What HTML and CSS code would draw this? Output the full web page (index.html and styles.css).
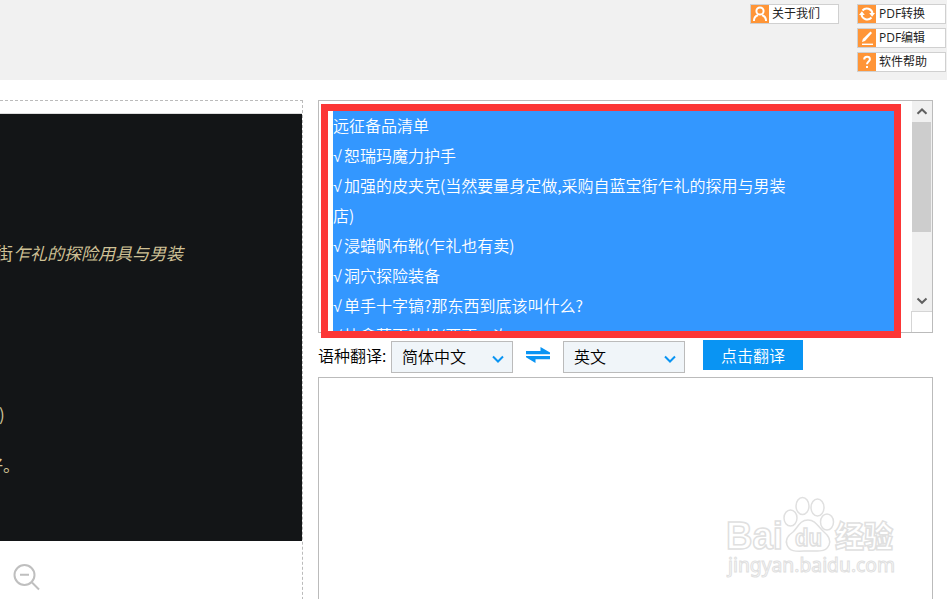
FILE: index.html
```html
<!DOCTYPE html>
<html lang="zh-CN">
<head>
  <meta charset="UTF-8">
  <title>图片文字识别</title>
  <link rel="stylesheet" href="styles.css">
</head>
<body>

<header>
  <div class="links">
    <a class="link">
      <svg viewBox="0 0 18 18"><circle cx="9" cy="6" r="3.600"/><path d="M3 16v-1a5.500 5.500 0 0 1 4-4.800M15 16v-1a5.500 5.500 0 0 0-4-4.800"/></svg>
      <span>关于我们</span>
    </a>
  </div>
  <div class="links">
    <a class="link">
      <svg viewBox="0 0 18 18"><path d="M4.500 5.500a5.700 5.700 0 0 1 10 3M13.500 12.500a5.700 5.700 0 0 1-10-3"/><path class="fill" d="M11.200 8H17l-2.900 3.800zM1 10h5.800L3.900 6.200z"/></svg>
      <span>PDF转换</span>
    </a>
    <a class="link">
      <svg class="thin" viewBox="0 0 18 18"><path d="M4 15.300h11"/><path class="fill" d="M4 13l.8-3L12.500 2.500l1.500 1.500L7 12z"/></svg>
      <span>PDF编辑</span>
    </a>
    <a class="link">
      <svg viewBox="0 0 18 18"><path d="M6.200 6.500c0-3.800 5.700-3.500 5.700-.3 0 2.300-2.900 2.200-2.900 5M9 13v2"/></svg>
      <span>软件帮助</span>
    </a>
  </div>
</header>

<main>
  <section class="preview">
    <div class="photo">
      <p class="shop">街<i>乍礼的探险用具与男装</i></p>
      <p class="bracket">)</p>
      <p class="good">好。</p>
    </div>
    <svg class="zoomOut" viewBox="0 0 28 28"><circle cx="11.500" cy="12" r="10"/><path d="M7 11.700h9M19 19.500l7 7"/></svg>
  </section>

  <section class="work">
    <div class="result">
      <div class="selected">
        <p>远征备品清单</p>
        <p><b>√</b>恕瑞玛魔力护手</p>
        <p><b>√</b>加强的皮夹克(当然要量身定做,采购自蓝宝街乍礼的探用与男装<br>店)</p>
        <p><b>√</b>浸蜡帆布靴(乍礼也有卖)</p>
        <p><b>√</b>洞穴探险装备</p>
        <p><b>√</b>单手十字镐?那东西到底该叫什么?</p>
        <p><b>√</b>快拿莫不装机(要不一次</p>
      </div>
      <div class="scrollbar">
        <svg viewBox="0 0 20 21"><path d="M5.500 12.800L10 8.500l4.500 4.300"/></svg>
        <div class="thumb"></div>
        <svg class="down" viewBox="0 0 20 21"><path d="M5.500 8.500L10 12.800l4.500-4.300"/></svg>
        <div class="corner"></div>
      </div>
      <div class="redFrame"></div>
    </div>

    <div class="toolbar">
      <span class="label">语种翻译:</span>
      <div class="select"><span>简体中文</span><svg viewBox="0 0 12 8"><path d="M1 1.500l5 5 5-5"/></svg></div>
      <svg class="swap" viewBox="0 0 24 16"><path d="M0 4h14.500V0L24 5.500v1.700H0zM24 9H0v1.300L9.500 16v-3.700H24z"/></svg>
      <div class="select"><span>英文</span><svg viewBox="0 0 12 8"><path d="M1 1.500l5 5 5-5"/></svg></div>
      <button>点击翻译</button>
    </div>

    <div class="output">
      <svg class="watermark" viewBox="0 0 174 86">
        <text x="0" y="53" font-size="38" textLength="57" lengthAdjust="spacingAndGlyphs" class="bold">Bai</text>
        <text x="109" y="51" font-size="30" textLength="58" lengthAdjust="spacingAndGlyphs" class="cjk">经验</text>
        <ellipse cx="64.500" cy="22" rx="6.500" ry="8"/>
        <ellipse cx="76.500" cy="10" rx="6.500" ry="8.500"/>
        <ellipse cx="91.500" cy="11.500" rx="6.500" ry="8.500"/>
        <ellipse cx="101" cy="26" rx="6.500" ry="8"/>
        <path d="M82 24c-8 0-10 7-15 12-6 4-8 8-6 13 3 8 11 6 22 6s17 1 20-6c2-5 0-9-5-13-6-5-8-12-16-12z"/>
        <text x="69" y="50" font-size="23" textLength="27" lengthAdjust="spacingAndGlyphs" class="du">du</text>
        <text x="2" y="76" font-size="19" textLength="167" lengthAdjust="spacingAndGlyphs" class="site">jingyan.baidu.com</text>
      </svg>
    </div>
  </section>
</main>

</body>
</html>
```
FILE: styles.css
```css
* {
  box-sizing: border-box;
}

body {
  margin: 0;
  height: 599px;
  overflow: hidden;
  background: #fff;
  color: #000;
  font-family: "Noto Sans CJK SC", sans-serif;
  font-weight: 350;
}

p {
  margin: 0;
}

svg {
  display: block;
  flex: none;
  fill: none;
}

header {
  height: 80px;
  padding: 4px 1px 0 0;
  background: #f1f1f1;
  display: flex;
  justify-content: flex-end;
  gap: 18px;
}

.links {
  display: flex;
  flex-direction: column;
  gap: 4px;
}

.link {
  width: 89px;
  height: 20px;
  border: 1px solid #d0d0d0;
  background: #fff;
  display: flex;
  align-items: flex-start;
  gap: 3px;
  color: #222;
  font-family: "Open Sans", "Noto Sans CJK SC", sans-serif;
  font-size: 12px;
  font-weight: 400;
  line-height: 18px;
  white-space: nowrap;
}

.link svg {
  width: 18px;
  height: 18px;
  background: #ff9537;
  stroke: #fff;
  stroke-width: 2;
}

.link svg.thin {
  stroke-width: 1.4;
}

.link .fill {
  fill: #fff;
  stroke: none;
}

main {
  display: flex;
  gap: 15px;
  padding-top: 20px;
}

.preview {
  width: 303px;
  height: 520px;
  padding-top: 12px;
  border-top: 1px dashed #bbb;
  border-right: 1px dashed #bbb;
}

.photo {
  height: 428px;
  padding-top: 125px;
  border-top: 1px solid #ddd;
  background: #131517;
  color: #cfc196;
  font-size: 17px;
  line-height: 28px;
  font-weight: 400;
  overflow: hidden;
}

.shop {
  margin-left: -4px;
}

.bracket {
  margin: 133px 0 0 -1px;
}

.good {
  margin: 23px 0 0 -14px;
}

.zoomOut {
  width: 28px;
  height: 28px;
  margin: 22px 0 0 13px;
  stroke: #bfbfbf;
  stroke-width: 2;
}

.work {
  width: 615px;
}

.result {
  position: relative;
  height: 233px;
  padding: 10px 0 1px 14px;
  border: 1px solid #bbb;
  display: flex;
}

.selected {
  width: 561px;
  height: 221px;
  overflow: hidden;
  background: #3397ff;
  color: #fff;
  font-size: 16px;
  line-height: 30px;
  white-space: nowrap;
}

.selected p {
  position: relative;
  top: -1px;
}

.selected b {
  display: inline-block;
  width: 11px;
  font: 400 16px "Liberation Sans", sans-serif;
}

.scrollbar {
  width: 20px;
  height: 231px;
  margin: -10px 0 0 auto;
  background: #f0f0f0;
}

.scrollbar svg {
  width: 20px;
  height: 21px;
  stroke: #606060;
  stroke-width: 2;
}

.thumb {
  width: 19px;
  height: 110px;
  background: #cdcdcd;
}

.scrollbar .down {
  margin-top: 58px;
}

.corner {
  height: 21px;
  margin-left: -1px;
  border: 1px solid #d5d5d5;
  border-width: 1px 0 0 1px;
  background: #fff;
}

/* highlight drawn over the text box */
.redFrame {
  position: absolute;
  left: 2px;
  top: 3px;
  width: 580px;
  height: 234px;
  border: 7px solid #fc3636;
}

.toolbar {
  height: 44px;
  display: flex;
  align-items: flex-start;
  padding-top: 7px;
  font-size: 16px;
}

.label {
  width: 73px;
  line-height: 30px;
  white-space: nowrap;
}

.select {
  width: 122px;
  height: 32px;
  margin-top: 1px;
  padding: 0 8px 0 10px;
  border: 1px solid #bbb;
  background: #f0f5f9;
  display: flex;
  align-items: flex-start;
  justify-content: space-between;
  line-height: 29px;
}

.select svg {
  width: 12px;
  height: 8px;
  margin-top: 13px;
  stroke: #0994f3;
  stroke-width: 2;
}

.swap {
  width: 24px;
  height: 16px;
  margin: 7px 13px 0;
  fill: #0994f3;
}

button {
  width: 100px;
  height: 30px;
  margin-left: 18px;
  padding: 0;
  border: none;
  background: #0994f3;
  color: #fff;
  font: inherit;
  line-height: 30px;
}

.output {
  height: 230px;
  border: 1px solid #bbb;
  display: flex;
  justify-content: flex-end;
  padding: 118px 32px 0 0;
}

.watermark {
  width: 174px;
  height: 86px;
  fill: #fff;
  stroke: #e0e0e0;
  stroke-width: 1.5;
  font-weight: 700;
}

.watermark .bold {
  font-family: "Liberation Sans", sans-serif;
}

.watermark .cjk {
  font-family: "Noto Sans CJK SC", sans-serif;
  font-weight: 900;
}

.watermark .du {
  font-family: "Liberation Sans", sans-serif;
}

.watermark .site {
  stroke-width: 1;
  font-family: "Noto Sans", sans-serif;
  font-weight: 400;
}
```
